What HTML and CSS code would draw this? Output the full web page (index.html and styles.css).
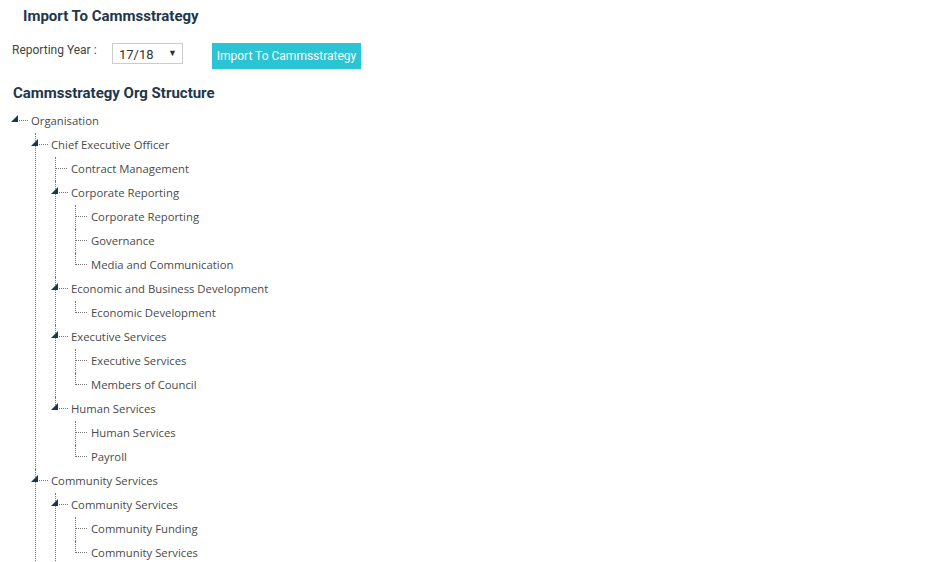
FILE: index.html
```html
<!DOCTYPE html>
<html lang="en">
<head>
  <meta charset="UTF-8">
  <meta name="viewport" content="width=device-width, initial-scale=1.0">
  <title>Import To Cammsstrategy</title>
  <link rel="stylesheet" href="styles.css">
</head>
<body>
  <div class="page">
    <h2 class="title">Import To Cammsstrategy</h2>

    <div class="import-bar">
      <label for="year" class="year-label">Reporting Year :</label>
      <div class="select-box">
        <select id="year">
          <option>17/18</option>
          <option>18/19</option>
        </select>
        <span class="arrow">&#9660;</span>
      </div>
      <button type="button" class="import-btn">Import To Cammsstrategy</button>
    </div>

    <h3 class="section-title">Cammsstrategy Org Structure</h3>

    <ul class="tree">
      <li class="node">
        <div class="item"><span class="toggle"></span>Organisation</div>
        <ul>
          <li class="node">
            <div class="item"><span class="toggle"></span>Chief Executive Officer</div>
            <ul>
              <li><div class="item">Contract Management</div></li>
              <li class="node">
                <div class="item"><span class="toggle"></span>Corporate Reporting</div>
                <ul>
                  <li><div class="item">Corporate Reporting</div></li>
                  <li><div class="item">Governance</div></li>
                  <li><div class="item">Media and Communication</div></li>
                </ul>
              </li>
              <li class="node">
                <div class="item"><span class="toggle"></span>Economic and Business Development</div>
                <ul>
                  <li><div class="item">Economic Development</div></li>
                </ul>
              </li>
              <li class="node">
                <div class="item"><span class="toggle"></span>Executive Services</div>
                <ul>
                  <li><div class="item">Executive Services</div></li>
                  <li><div class="item">Members of Council</div></li>
                </ul>
              </li>
              <li class="node">
                <div class="item"><span class="toggle"></span>Human Services</div>
                <ul>
                  <li><div class="item">Human Services</div></li>
                  <li><div class="item">Payroll</div></li>
                </ul>
              </li>
            </ul>
          </li>
          <li class="node">
            <div class="item"><span class="toggle"></span>Community Services</div>
            <ul>
              <li class="node">
                <div class="item"><span class="toggle"></span>Community Services</div>
                <ul>
                  <li><div class="item">Community Funding</div></li>
                  <li><div class="item">Community Services</div></li>
                </ul>
              </li>
              <li class="node">
                <div class="item"><span class="toggle"></span>Library Services</div>
                <ul>
                  <li><div class="item">Libraries</div></li>
                </ul>
              </li>
            </ul>
          </li>
          <li class="node">
            <div class="item"><span class="toggle"></span>Infrastructure Services</div>
            <ul>
              <li><div class="item">Assets</div></li>
            </ul>
          </li>
        </ul>
      </li>
    </ul>
  </div>
</body>
</html>
```

FILE: styles.css
```css
html, body {
  margin: 0;
  overflow: hidden;
}
body {
  font-family: Roboto, Arial, sans-serif;
  background: #fff;
  color: #444;
}
.page {
  padding: 6px 0 0 0;
}
.title {
  margin: 0 0 0 23px;
  font-size: 15px;
  line-height: 20px;
  font-weight: 700;
  color: #22364b;
}
.import-bar {
  display: flex;
  align-items: flex-start;
  margin: 17px 0 0 12px;
}
.year-label {
  font-size: 12px;
  line-height: 14px;
  color: #444;
  width: 100px;
}
.select-box {
  position: relative;
  width: 71px;
  height: 21px;
  box-sizing: border-box;
  border: 1px solid #ccc;
}
.select-box select {
  appearance: none;
  -webkit-appearance: none;
  border: none;
  background: transparent;
  width: 100%;
  height: 19px;
  padding: 0 0 0 6px;
  font-family: Roboto, Arial, sans-serif;
  font-size: 13px;
  color: #333;
  outline: none;
}
.select-box .arrow {
  position: absolute;
  right: 5px;
  top: 4px;
  font-size: 9px;
  color: #333;
  pointer-events: none;
}
.import-btn {
  margin-left: 29px;
  width: 149px;
  height: 26px;
  padding: 0;
  border: none;
  background: #2ac4d4;
  color: #fff;
  font-family: Roboto, Arial, sans-serif;
  font-size: 12px;
  white-space: nowrap;
  cursor: pointer;
}
.section-title {
  margin: 14px 0 0 13px;
  font-size: 15px;
  line-height: 20px;
  font-weight: 700;
  color: #22364b;
}

/* tree */
.tree, .tree ul {
  list-style: none;
  margin: 0;
  padding: 0;
}
.tree {
  margin: 6px 0 0 11px;
  font-family: "Open Sans", "Noto Sans", sans-serif;
  font-size: 11.3px;
  color: #4a4a4a;
}
.tree ul {
  margin-left: 20px;
}
.tree li {
  position: relative;
}
.tree ul > li::before {
  content: "";
  position: absolute;
  left: 4px;
  top: 0;
  bottom: 0;
  border-left: 1px dotted #777;
}
.tree ul > li:last-child::before {
  bottom: auto;
  height: 12px;
}
.item {
  position: relative;
  height: 24px;
  line-height: 24px;
  padding-left: 20px;
  white-space: nowrap;
}
.item::before {
  content: "";
  position: absolute;
  left: 5px;
  width: 11px;
  top: 11px;
  border-top: 1px dotted #777;
}
.node > .item::before {
  left: 8px;
  width: 9px;
}
.toggle {
  position: absolute;
  left: 0;
  top: 6px;
  width: 0;
  height: 0;
  border-left: 7px solid transparent;
  border-bottom: 7px solid #1d3550;
  z-index: 1;
}
```
